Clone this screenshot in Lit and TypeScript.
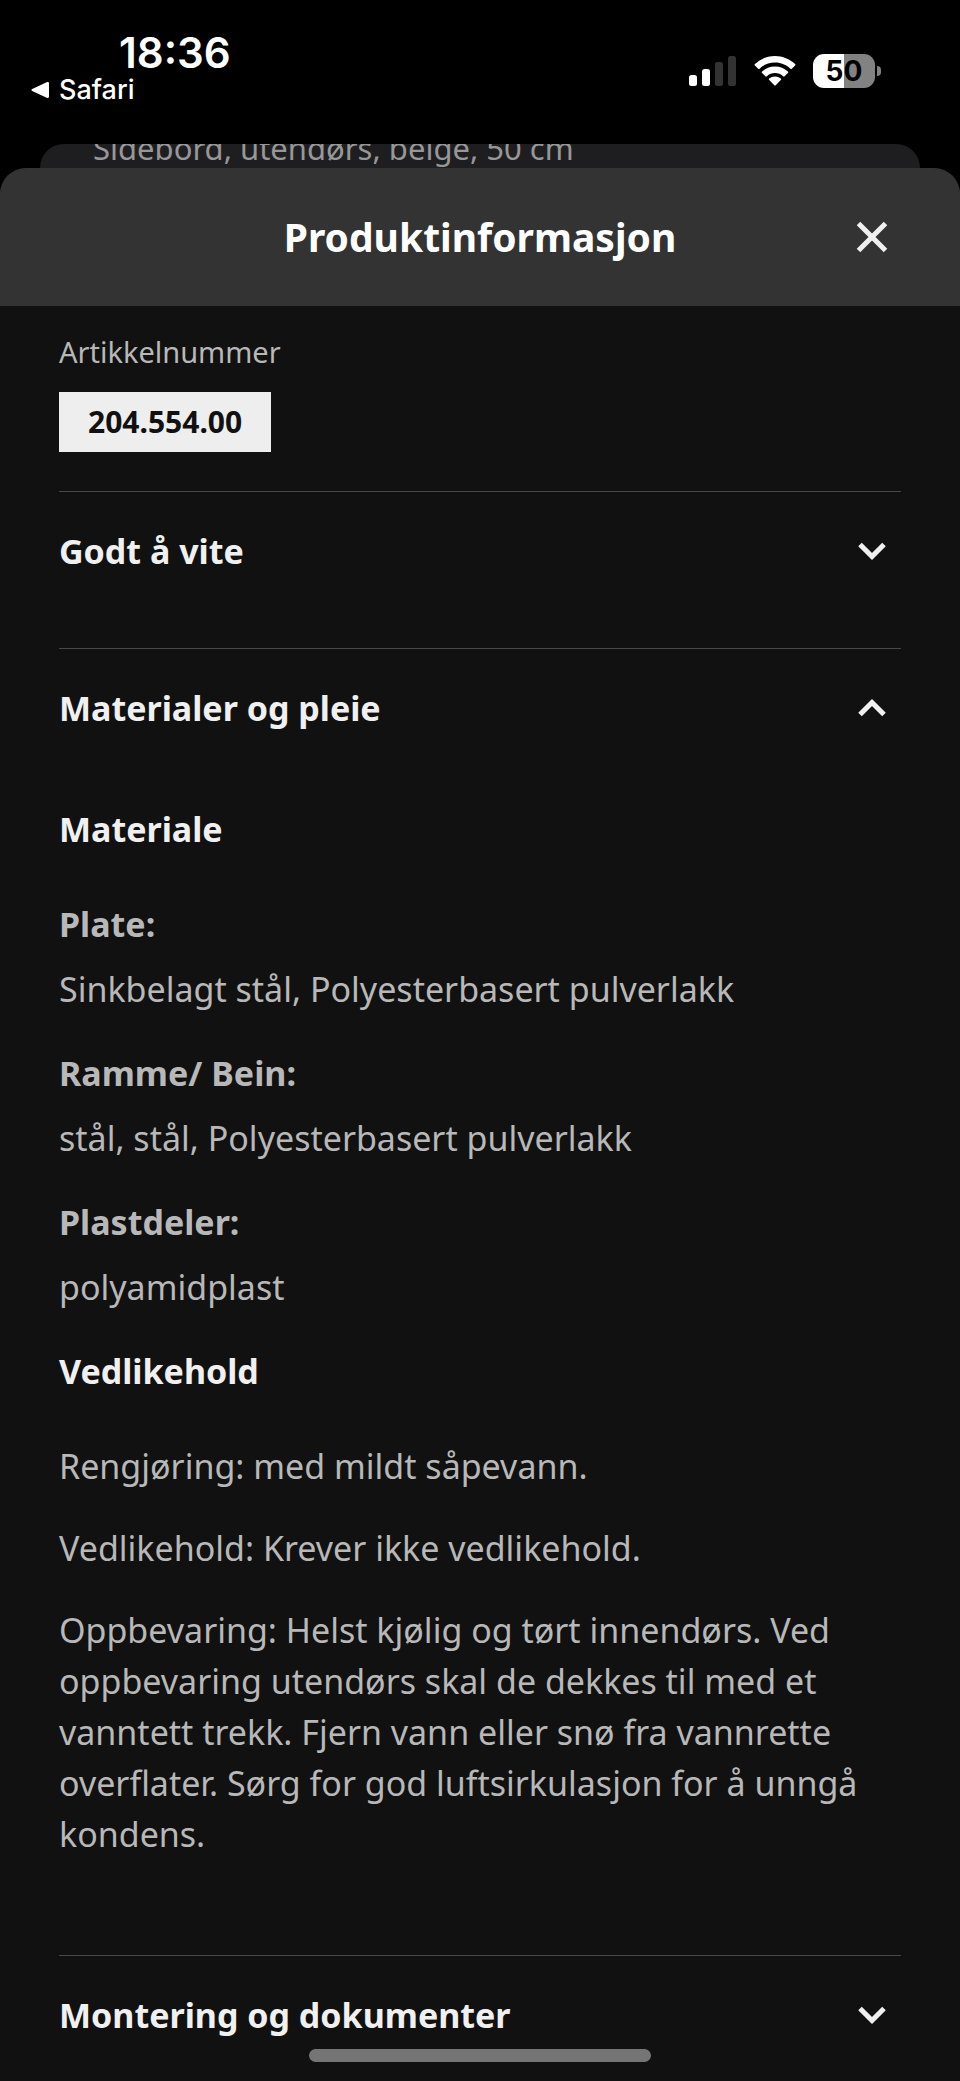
import { LitElement, html, css, svg } from "lit";
import { customElement, property, state } from "lit/decorators.js";

const chevron = (open: boolean) => html`
  <svg class="chevron" viewBox="0 1 28 18" aria-hidden="true">
    ${open
      ? svg`<path d="M2 15.500 14 3.500 26 15.500" />`
      : svg`<path d="M2 2.500 14 14.500 26 2.500" />`}
  </svg>
`;

@customElement("status-bar")
export class StatusBar extends LitElement {
  static styles = css`
    :host {
      display: flex;
      justify-content: space-between;
      height: 144px;
      box-sizing: border-box;
      padding: 30px 79px 0 31px;
      font-family: Inter, "Liberation Sans", sans-serif;
      color: #fff;
    }
    .left {
      display: flex;
      flex-direction: column;
    }
    .time {
      padding-left: 88px;
      font-size: 42px;
      line-height: 46px;
      font-weight: 600;
    }
    .back {
      display: flex;
      align-items: center;
      gap: 9px;
      color: inherit;
      text-decoration: none;
      font-size: 27px;
      line-height: 28px;
      font-weight: 500;
    }
    .arrow {
      width: 19px;
      height: 18px;
      fill: #fff;
    }
    .icons {
      display: flex;
      align-items: center;
      gap: 17px;
      height: 82px;
    }
    .signal {
      width: 48px;
      height: 32px;
      fill: #fff;
    }
    .weak {
      fill: #333;
    }
    .wifi {
      width: 42px;
      height: 32px;
      fill: #fff;
    }
    .battery {
      display: flex;
      align-items: center;
      gap: 2px;
    }
    .cell {
      width: 62px;
      height: 34px;
      border-radius: 11px;
      background: linear-gradient(to right, #fff 50%, #828282 50%);
      color: #000;
      font-size: 28px;
      line-height: 34px;
      font-weight: 700;
      text-align: center;
    }
    .nub {
      width: 4px;
      height: 10px;
      border-radius: 0 5px 5px 0;
      background: #828282;
    }
  `;

  render() {
    return html`
      <div class="left">
        <span class="time">18:36</span>
        <a class="back" href="#safari">
          <svg class="arrow" viewBox="0 0 19 18" aria-hidden="true">
            <path d="M1.2 7.9 16.2 1.1Q18 .4 18 2.4V15.6Q18 17.6 16.2 16.9L1.2 10.1Q-.4 9 1.2 7.9Z" />
          </svg>
          <span>Safari</span>
        </a>
      </div>
      <div class="icons">
        <svg class="signal" viewBox="0 0 48 32" aria-hidden="true">
          <rect x="0" y="20" width="8" height="11" rx="2.5" />
          <rect x="13" y="14" width="8" height="17" rx="2.5" />
          <rect class="weak" x="26" y="7" width="8" height="24" rx="2.5" />
          <rect class="weak" x="39" y="1" width="8" height="30" rx="2.5" />
        </svg>
        <svg class="wifi" viewBox="0 0 42 32" aria-hidden="true">
          <path d="M21 1C13.300 1 6.200 4 .9 9.100a1 1 0 0 0 0 1.400l3.300 3.200a1 1 0 0 0 1.400 0A22.200 22.200 0 0 1 21 7.500c6 0 11.400 2.300 15.400 6.200a1 1 0 0 0 1.400 0l3.300-3.200a1 1 0 0 0 0-1.400C35.800 4 28.700 1 21 1Z" />
          <path d="M21 11.500c-5 0-9.500 1.900-12.900 5a1 1 0 0 0 0 1.500l3.300 3.300a1 1 0 0 0 1.400 0 12.100 12.100 0 0 1 16.400 0 1 1 0 0 0 1.400 0l3.300-3.300a1 1 0 0 0 0-1.500c-3.400-3.100-7.900-5-12.900-5Z" />
          <path d="M21 21.500c-2.200 0-4.200.8-5.800 2.100a1 1 0 0 0 0 1.500l5.100 5.200a1 1 0 0 0 1.400 0l5.100-5.200a1 1 0 0 0 0-1.500A9 9 0 0 0 21 21.500Z" />
        </svg>
        <div class="battery">
          <span class="cell">50</span>
          <span class="nub"></span>
        </div>
      </div>
    `;
  }
}

@customElement("accordion-item")
export class AccordionItem extends LitElement {
  @property() heading = "";
  @property({ type: Boolean, reflect: true }) open = false;

  static styles = css`
    :host {
      display: block;
      border-top: 1px solid #484848;
    }
    .title {
      margin: 0;
      font-size: 34px;
      line-height: 51px;
    }
    .toggle {
      display: flex;
      align-items: center;
      justify-content: space-between;
      width: 100%;
      padding: 34px 15px 32px 0;
      border: 0;
      background: none;
      color: #f0f0f0;
      font: inherit;
      font-weight: 700;
      text-align: left;
      cursor: pointer;
    }
    .chevron {
      width: 28px;
      height: 18px;
      overflow: visible;
      fill: none;
      stroke: #f0f0f0;
      stroke-width: 5;
    }
    .panel {
      padding: 38px 0 95px;
    }
    .closed {
      height: 39px;
    }
  `;

  private toggle() {
    this.open = !this.open;
  }

  render() {
    return html`
      <h2 class="title">
        <button class="toggle" aria-expanded=${this.open} @click=${this.toggle}>
          <span>${this.heading}</span>
          ${chevron(this.open)}
        </button>
      </h2>
      ${this.open ? html`<div class="panel"><slot></slot></div>` : html`<div class="closed"></div>`}
    `;
  }
}

@customElement("app-root")
export class AppRoot extends LitElement {
  @state() private parts = [
    { name: "Plate:", material: "Sinkbelagt stål, Polyesterbasert pulverlakk" },
    { name: "Ramme/ Bein:", material: "stål, stål, Polyesterbasert pulverlakk" },
    { name: "Plastdeler:", material: "polyamidplast" },
  ];

  @state() private care = [
    "Rengjøring: med mildt såpevann.",
    "Vedlikehold: Krever ikke vedlikehold.",
    "Oppbevaring: Helst kjølig og tørt innendørs. Ved oppbevaring utendørs skal de dekkes til med et vanntett trekk. Fjern vann eller snø fra vannrette overflater. Sørg for god luftsirkulasjon for å unngå kondens.",
  ];

  static styles = css`
    :host {
      display: flex;
      flex-direction: column;
      height: 100vh;
      overflow: hidden;
      background: #000;
      color: #b8b8b8;
      font-family: "Noto Sans", sans-serif;
      font-size: 34px;
      line-height: 51px;
    }
    .behind {
      flex: none;
      display: flex;
      align-items: flex-end;
      height: 24px;
      margin: 0 40px;
      padding: 0 53px;
      overflow: hidden;
      border-radius: 24px 24px 0 0;
      background: #1e1e21;
      color: #979797;
      font-size: 31px;
      line-height: 40px;
    }
    .sheet {
      flex: 1;
      min-height: 0;
      display: flex;
      flex-direction: column;
      overflow: hidden;
      border-radius: 26px 26px 0 0;
      background: #111;
    }
    .header {
      flex: none;
      display: grid;
      grid-template-columns: 1fr auto 1fr;
      align-items: center;
      height: 138px;
      padding: 0 72px;
      background: #333;
      color: #fff;
    }
    .name {
      grid-column: 2;
      margin: 0;
      font-size: 39px;
      line-height: 52px;
      font-weight: 700;
    }
    .close {
      justify-self: end;
      display: flex;
      padding: 0;
      border: 0;
      background: none;
      cursor: pointer;
    }
    .cross {
      width: 32px;
      height: 32px;
      fill: none;
      stroke: #f0f0f0;
      stroke-width: 5;
    }
    .body {
      padding: 26px 59px 0;
    }
    .label {
      margin: 0;
      font-size: 29px;
      line-height: 40px;
    }
    .number {
      display: inline-block;
      margin: 20px 0 39px;
      padding: 10px 29px;
      background: #eee;
      color: #111;
      font-size: 30px;
      line-height: 40px;
      font-weight: 700;
      vertical-align: top;
    }
    .subtitle {
      margin: 0 0 44px;
      color: #f0f0f0;
      font-size: 34px;
      font-weight: 700;
    }
    .parts {
      margin: 0;
    }
    .part {
      font-weight: 700;
    }
    .material {
      margin: 14px 0 33px;
    }
    .care {
      margin: 0 0 31px;
    }
    .care:last-child {
      margin: 0;
    }
    .home {
      position: absolute;
      bottom: 19px;
      left: 50%;
      width: 342px;
      height: 13px;
      margin-left: -171px;
      border-radius: 7px;
      background: #757575;
    }
  `;

  render() {
    return html`
      <status-bar></status-bar>
      <div class="behind">Sidebord, utendørs, beige, 50 cm</div>
      <main class="sheet">
        <header class="header">
          <h1 class="name">Produktinformasjon</h1>
          <button class="close" aria-label="Lukk">
            <svg class="cross" viewBox="0 0 32 32" aria-hidden="true">
              <path d="M2.500 2.500 29.500 29.500M29.500 2.500 2.500 29.500" />
            </svg>
          </button>
        </header>
        <div class="body">
          <p class="label">Artikkelnummer</p>
          <span class="number">204.554.00</span>
          <accordion-item heading="Godt å vite"></accordion-item>
          <accordion-item heading="Materialer og pleie" open>
            <h3 class="subtitle">Materiale</h3>
            <dl class="parts">
              ${this.parts.map(
                (p) => html`<dt class="part">${p.name}</dt><dd class="material">${p.material}</dd>`
              )}
            </dl>
            <h3 class="subtitle">Vedlikehold</h3>
            ${this.care.map((text) => html`<p class="care">${text}</p>`)}
          </accordion-item>
          <accordion-item heading="Montering og dokumenter"></accordion-item>
        </div>
      </main>
      <div class="home"></div>
    `;
  }
}
